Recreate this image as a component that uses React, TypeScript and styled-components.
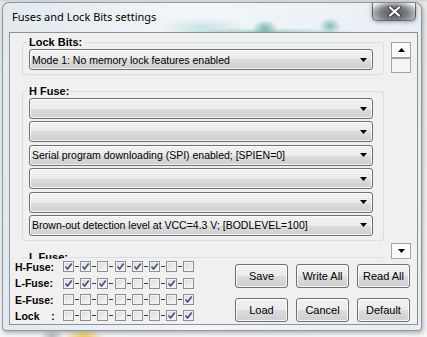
import React from "react";
import styled, { createGlobalStyle } from "styled-components";

// fuse combos shown in the scroll panel
const lockBits = ["Mode 1: No memory lock features enabled"];
const hFuse = [
  "",
  "",
  "Serial program downloading (SPI) enabled; [SPIEN=0]",
  "",
  "",
  "Brown-out detection level at VCC=4.3 V; [BODLEVEL=100]",
];
const lFuse = ["", "", ""];

const bitRows = [
  { name: "H-Fuse:", bits: [1, 1, 0, 1, 1, 1, 0, 0] },
  { name: "L-Fuse:", bits: [1, 1, 1, 0, 0, 0, 1, 0] },
  { name: "E-Fuse:", bits: [0, 0, 0, 0, 0, 0, 0, 1] },
  { name: "Lock    :", bits: [0, 0, 0, 0, 0, 0, 1, 1] },
];

const GlobalStyle = createGlobalStyle`
  html, body {
    margin: 0;
    padding: 0;
  }
  body {
    width: 427px;
    height: 337px;
    overflow: hidden;
    background: #efefef;
    font-family: "Liberation Sans", Arial, sans-serif;
  }
`;

const Desktop = styled.div`
  width: 427px;
  height: 337px;
  box-sizing: border-box;
  padding: 2px 0 0 2px;
  overflow: hidden;
  background:
    radial-gradient(ellipse 20px 9px at 84px 338px, #f2c53c, transparent),
    radial-gradient(ellipse 12px 6px at 52px 336px, #b9b9b9, transparent),
    linear-gradient(#d3d3d3 0, #e8e8e8 3px, #f6f6f6 100%);
`;

const Window = styled.div`
  width: 420px;
  height: 329px;
  box-sizing: border-box;
  display: flex;
  flex-direction: column;
  padding: 0 3px 5px 6px;
  border: 1px solid rgba(70, 80, 90, 0.55);
  border-radius: 7px 7px 4px 4px;
  box-shadow: 1px 2px 4px rgba(0, 0, 0, 0.3);
  background:
    radial-gradient(ellipse 13px 8px at 262px 25px, rgba(25, 140, 115, 0.55), transparent),
    radial-gradient(ellipse 11px 8px at 327px 23px, rgba(25, 140, 115, 0.5), transparent),
    radial-gradient(ellipse 95px 4px at 262px 29px, rgba(50, 155, 135, 0.4), transparent),
    radial-gradient(ellipse 45px 9px at 200px 24px, rgba(60, 160, 140, 0.22), transparent),
    linear-gradient(to right, #e1e9ef, #f2f6f9 45%, #e7eef3);
`;

const TitleBar = styled.div`
  height: 29px;
  display: flex;
  align-items: flex-start;
  padding-left: 3px;
`;

const Title = styled.div`
  padding-top: 6px;
  line-height: 16px;
  font-family: "Noto Sans", "Open Sans", sans-serif;
  font-size: 11px;
  color: #000;
`;

const CloseButton = styled.div`
  margin-left: auto;
  margin-right: 2px;
  width: 44px;
  height: 18px;
  box-sizing: border-box;
  display: flex;
  align-items: center;
  justify-content: center;
  border: 1px solid rgba(45, 50, 55, 0.65);
  border-top: none;
  border-radius: 0 0 5px 5px;
  box-shadow: 0 1px 4px rgba(0, 0, 0, 0.35);
  background:
    radial-gradient(ellipse 60% 75% at 50% 60%, #505459 0%, #7b8085 55%, rgba(196, 201, 206, 0) 100%),
    linear-gradient(#eef1f3, #bfc4c9);
`;

const Client = styled.div`
  height: 293px;
  box-sizing: border-box;
  display: flex;
  flex-direction: column;
  border: 1px solid #8b939a;
  background: #f0f0f0;
`;

const ScrollPanel = styled.div`
  height: 226px;
  display: flex;
  overflow: hidden;
`;

const PanelContent = styled.div`
  flex: 1;
  padding-top: 3px;
  overflow: hidden;
`;

const Group = styled.fieldset`
  margin: 0 6px 0 12px;
  padding: 0 10px 4px 6px;
  border: 1px solid #d5dfe5;
  border-radius: 3px;
  display: flex;
  flex-direction: column;
  gap: 2.4px;

  & + & {
    margin-top: 10px;
  }
`;

const Legend = styled.legend`
  padding: 0 2px;
  margin-left: -2px;
  font-size: 11px;
  line-height: 13px;
  font-weight: bold;
  color: #000;
`;

const Combo = styled.div`
  height: 21px;
  box-sizing: border-box;
  display: flex;
  align-items: center;
  padding: 0 5px 0 2px;
  border: 1px solid #707070;
  border-radius: 3px;
  box-shadow: inset 0 0 0 1px rgba(255, 255, 255, 0.75);
  background: linear-gradient(#f2f2f2 0%, #ebebeb 50%, #dddddd 50%, #cfcfcf 100%);
  font-size: 10.5px;
  color: #000;
  white-space: nowrap;
`;

const ComboText = styled.span`
  flex: 1;
  overflow: hidden;
`;

const ScrollBar = styled.div`
  width: 27px;
  display: flex;
  flex-direction: column;
  padding: 9px 0 0 1px;
  box-sizing: border-box;
  background:
    repeating-conic-gradient(#eaeaea 0 25%, #f7f7f7 0 50%) 0 0 / 2px 2px;
`;

const ScrollButton = styled.div<{ $thumb?: boolean }>`
  width: 20px;
  height: ${(p) => (p.$thumb ? 15 : 16)}px;
  box-sizing: border-box;
  display: flex;
  align-items: center;
  justify-content: center;
  border: 1px solid #a3a3a3;
  background: ${(p) => (p.$thumb ? "#f4f4f4" : "#fbfbfb")};
`;

const Spacer = styled.div`
  flex: 1;
`;

const BottomArea = styled.div`
  flex: 1;
  display: flex;
  padding: 0 7px 0 5px;
`;

const BitGrid = styled.div`
  display: flex;
  flex-direction: column;
`;

const BitRow = styled.div`
  height: 16.3px;
  display: flex;
  align-items: center;
`;

const RowLabel = styled.div`
  width: 45px;
  margin-right: 3px;
  font-size: 10.5px;
  font-weight: bold;
  color: #000;
  white-space: pre;
`;

const Box = styled.div`
  width: 11px;
  height: 11px;
  box-sizing: border-box;
  display: flex;
  align-items: center;
  justify-content: center;
  border: 1px solid #8e8f8f;
  box-shadow: inset 0 0 0 1px #f4f4f4;
  background: linear-gradient(135deg, #d9d9d9, #f7f7f7);
`;

const Dash = styled.div`
  width: 6.2px;
  display: flex;
  justify-content: center;

  &::before {
    content: "";
    width: 4px;
    height: 1px;
    background: #3c3c3c;
  }
`;

const ButtonGrid = styled.div`
  margin: 5px 0 0 auto;
  display: grid;
  grid-template-columns: repeat(3, 53px);
  grid-auto-rows: 24px;
  column-gap: 8px;
  row-gap: 10px;
`;

const Button = styled.button`
  margin: 0;
  padding: 0;
  border: 1px solid #707070;
  border-radius: 3px;
  box-shadow: inset 0 0 0 1px rgba(255, 255, 255, 0.8);
  background: linear-gradient(#f2f2f2 0%, #ebebeb 50%, #dddddd 50%, #cfcfcf 100%);
  font-family: "Liberation Sans", Arial, sans-serif;
  font-size: 11px;
  color: #000;
`;

const Arrow = ({ up }: { up?: boolean }) => (
  <svg width="7" height="4" viewBox="0 0 7 4">
    <path d={up ? "M0 4 L3.5 0 L7 4 Z" : "M0 0 L7 0 L3.5 4 Z"} fill="#000" />
  </svg>
);

const Check = () => (
  <svg width="9" height="9" viewBox="0 0 9 9">
    <path d="M1.5 4.5 L3.6 7 L7.8 1.5" fill="none" stroke="#3f5196" strokeWidth="1.7" />
  </svg>
);

const CloseIcon = () => (
  <svg width="13" height="11" viewBox="0 0 13 11">
    <path d="M2 1.5 L11 9.5 M11 1.5 L2 9.5" stroke="#3a3d40" strokeWidth="4" strokeLinecap="round" />
    <path d="M2 1.5 L11 9.5 M11 1.5 L2 9.5" stroke="#fff" strokeWidth="2.2" strokeLinecap="round" />
  </svg>
);

const FuseCombo = ({ text }: { text: string }) => (
  <Combo>
    <ComboText>{text}</ComboText>
    <Arrow />
  </Combo>
);

const App = () => {
  return (
    <Desktop>
      <GlobalStyle />
      <Window>
        <TitleBar>
          <Title>Fuses and Lock Bits settings</Title>
          <CloseButton>
            <CloseIcon />
          </CloseButton>
        </TitleBar>
        <Client>
          <ScrollPanel>
            <PanelContent>
              <Group>
                <Legend>Lock Bits:</Legend>
                {lockBits.map((t, i) => (
                  <FuseCombo key={i} text={t} />
                ))}
              </Group>
              <Group>
                <Legend>H Fuse:</Legend>
                {hFuse.map((t, i) => (
                  <FuseCombo key={i} text={t} />
                ))}
              </Group>
              <Group>
                <Legend>L Fuse:</Legend>
                {lFuse.map((t, i) => (
                  <FuseCombo key={i} text={t} />
                ))}
              </Group>
            </PanelContent>
            <ScrollBar>
              <ScrollButton>
                <Arrow up />
              </ScrollButton>
              <ScrollButton $thumb />
              <Spacer />
              <ScrollButton>
                <Arrow />
              </ScrollButton>
            </ScrollBar>
          </ScrollPanel>
          <BottomArea>
            <BitGrid>
              {bitRows.map((row) => (
                <BitRow key={row.name}>
                  <RowLabel>{row.name}</RowLabel>
                  {row.bits.map((b, i) => (
                    <React.Fragment key={i}>
                      {i > 0 && <Dash />}
                      <Box>{b ? <Check /> : null}</Box>
                    </React.Fragment>
                  ))}
                </BitRow>
              ))}
            </BitGrid>
            <ButtonGrid>
              <Button>Save</Button>
              <Button>Write All</Button>
              <Button>Read All</Button>
              <Button>Load</Button>
              <Button>Cancel</Button>
              <Button>Default</Button>
            </ButtonGrid>
          </BottomArea>
        </Client>
      </Window>
    </Desktop>
  );
};

export default App;
